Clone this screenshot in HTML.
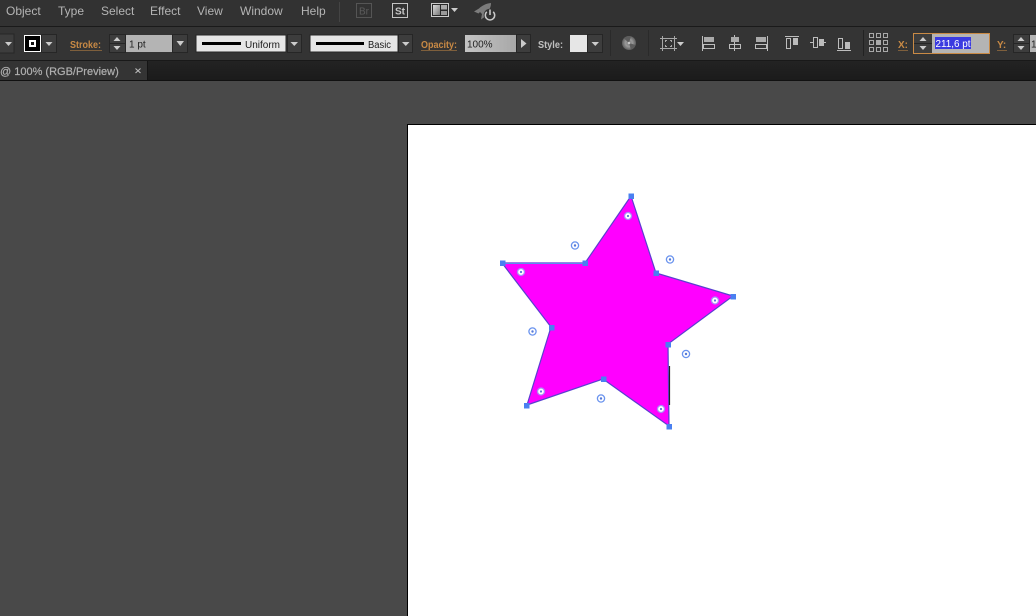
<!DOCTYPE html>
<html><head><meta charset="utf-8"><style>
html,body{margin:0;padding:0;background:#494949}
svg{display:block}
text{font-family:"Liberation Sans",sans-serif}
.m{font-size:12px;fill:#b4b4b4}
.o{font-size:10px;font-weight:bold;fill:#c98a45}
</style></head><body>
<svg width="1036" height="616" viewBox="0 0 1036 616" xmlns="http://www.w3.org/2000/svg">
<defs>
<linearGradient id="tb" x1="0" y1="0" x2="0" y2="1"><stop offset="0" stop-color="#232323"/><stop offset="1" stop-color="#1b1b1b"/></linearGradient>
<linearGradient id="f" x1="0" y1="0" x2="1" y2="0"><stop offset="0" stop-color="#c4c4c4"/><stop offset="1" stop-color="#a8a8a8"/></linearGradient>
<linearGradient id="lg" x1="0" y1="0" x2="1" y2="1"><stop offset="0" stop-color="#ddd"/><stop offset="1" stop-color="#777"/></linearGradient>
<radialGradient id="gl"><stop offset="0" stop-color="#777"/><stop offset=".5" stop-color="#9a9a9a"/><stop offset="1" stop-color="#5e5e5e"/></radialGradient>
</defs>
<rect width="1036" height="616" fill="#494949"/>
<rect width="1036" height="26" fill="#323232"/>
<rect y="26" width="1036" height="1" fill="#1a1a1a"/>
<rect y="27" width="1036" height="33" fill="#343434"/>
<rect y="60" width="1036" height="1" fill="#191919"/>
<rect y="61" width="1036" height="19" fill="url(#tb)"/>
<rect y="80" width="1036" height="1" fill="#111"/>
<rect y="61" width="148" height="19" fill="#343434"/>
<rect x="147" y="61" width="1" height="19" fill="#151515"/>
<text x="0" y="75" fill="#b0b0b0" style="font-size:11px;stroke:#b0b0b0;stroke-width:.2">@ 100% (RGB/Preview)</text>
<path d="M135.500 68.500l5 4.500m0-4.500l-5 4.500" stroke="#bbb" stroke-width="1.100" fill="none"/>

<text class="m" x="6" y="15">Object</text>
<text class="m" x="58" y="15">Type</text>
<text class="m" x="101" y="15">Select</text>
<text class="m" x="150" y="15">Effect</text>
<text class="m" x="197" y="15">View</text>
<text class="m" x="240" y="15">Window</text>
<text class="m" x="301" y="15">Help</text>
<rect x="339" y="2" width="1" height="20" fill="#444"/>

<rect x="356.500" y="3.500" width="15" height="14" fill="none" stroke="#555"/>
<text x="359" y="14.500" fill="#5c5c5c" style="font-size:10px" textLength="10" lengthAdjust="spacing">Br</text>
<rect x="392.500" y="3.500" width="15" height="14" fill="none" stroke="#c4c4c4"/>
<text x="395" y="14.500" style="font-size:10px;font-weight:bold" fill="#c8c8c8" textLength="10" lengthAdjust="spacing">St</text>
<rect x="431.500" y="3.500" width="17" height="13" fill="#2a2a2a" stroke="#ccc"/>
<rect x="433" y="5" width="7" height="10" fill="url(#lg)"/>
<rect x="441" y="5" width="6" height="4.500" fill="#aaa"/>
<rect x="441" y="11" width="6" height="4" fill="#999"/>
<path d="M451 8h7l-3.500 4z" fill="#ccc"/>
<path d="M491 3C486 3.500 482 5.500 479 8.500L474 11.500L478.500 13.500L480 12L482 14L481 19.500L484.500 17C485 14 486 12 488 11C490 9 491 6 491 3Z" fill="#7c7c7c"/>
<circle cx="490" cy="15" r="6.300" fill="#323232"/>
<path d="M486.800 11.800a4.700 4.700 0 1 0 6.400 0" fill="none" stroke="#c8c8c8" stroke-width="1.500"/>
<rect x="489.200" y="9.500" width="1.600" height="5.500" fill="#c8c8c8"/>

<!-- left dropdown -->
<rect x="-1" y="34" width="15" height="19" fill="#3d3d3d" stroke="#262626"/>
<path d="M5 42h7l-3.500 4z" fill="#ccc"/>
<rect x="24.500" y="35.500" width="16" height="16" fill="#000" stroke="#fff"/>
<rect x="29" y="40" width="7" height="7" fill="#fff"/>
<rect x="31" y="42" width="3" height="3" fill="#111"/>
<rect x="41.500" y="34.500" width="15" height="18" fill="#3d3d3d" stroke="#262626"/>
<path d="M45.500 42h7l-3.500 4z" fill="#ccc"/>

<text class="o" x="70" y="48" textLength="31" lengthAdjust="spacingAndGlyphs">Stroke:</text>
<path d="M70.500 50.500h31" stroke="#c98a45" stroke-dasharray="1 1"/>

<rect x="109.500" y="34.500" width="16" height="18" fill="#3d3d3d" stroke="#262626"/>
<rect x="110" y="43" width="15" height="1" fill="#262626"/>
<path d="M113.500 41l3.500-4 3.500 4zM113.500 46h7l-3.500 4z" fill="#ccc"/>
<rect x="126" y="35" width="46" height="17" fill="#b4b4b4"/>
<text x="129" y="47.500" style="font-size:10px" fill="#222">1 pt</text>
<rect x="172.500" y="34.500" width="15" height="18" fill="#3d3d3d" stroke="#262626"/>
<path d="M176.500 41h7.500l-3.700 5z" fill="#ccc"/>

<rect x="196" y="35" width="90" height="17" fill="#e6e6e6" stroke="#262626"/>
<rect x="202" y="42" width="39" height="3" fill="#000"/>
<text x="245" y="48" style="font-size:10px" fill="#1a1a1a">Uniform</text>
<rect x="287.500" y="34.500" width="14" height="18" fill="#3d3d3d" stroke="#262626"/>
<path d="M290.500 42h7.500l-3.700 4z" fill="#ccc"/>

<rect x="310" y="35" width="88" height="17" fill="#e6e6e6" stroke="#262626"/>
<rect x="316" y="42" width="48" height="3" fill="#000"/>
<text x="368" y="48" style="font-size:10px" fill="#1a1a1a" textLength="23" lengthAdjust="spacingAndGlyphs">Basic</text>
<rect x="398.500" y="34.500" width="14" height="18" fill="#3d3d3d" stroke="#262626"/>
<path d="M402 42h7.500l-3.700 4z" fill="#ccc"/>

<text class="o" x="421" y="48" textLength="36" lengthAdjust="spacingAndGlyphs">Opacity:</text>
<path d="M421.500 50.500h36" stroke="#c98a45" stroke-dasharray="1 1"/>
<rect x="465" y="35" width="51" height="17" fill="url(#f)"/>
<text x="467" y="47.500" style="font-size:10px" fill="#222">100%</text>
<rect x="516.500" y="34.500" width="14" height="18" fill="#3d3d3d" stroke="#262626"/>
<path d="M521 39l5.500 4.500-5.500 4.500z" fill="#ccc"/>

<text x="538" y="48" style="font-size:10px;font-weight:bold" fill="#c0c0c0" textLength="25" lengthAdjust="spacingAndGlyphs">Style:</text>
<rect x="570" y="35" width="17" height="17" fill="#e6e6e6"/>
<rect x="587.500" y="34.500" width="15" height="18" fill="#3d3d3d" stroke="#262626"/>
<path d="M591.500 42h7.500l-3.700 4z" fill="#ccc"/>
<rect x="610" y="30" width="1" height="26" fill="#2a2a2a"/>
<circle cx="629" cy="43" r="7" fill="url(#gl)"/>
<path d="M629 43L624 38.500A7 7 0 0 1 631 36.300ZM629 43L635.500 45A7 7 0 0 1 631 49.700Z" fill="#5c5c5c"/>
<circle cx="629" cy="43" r="1.300" fill="#c4c4c4"/>
<rect x="648" y="30" width="1" height="26" fill="#2a2a2a"/>

<!-- transform icon -->
<g fill="none" stroke="#a8a8a8">
<rect x="662.500" y="38.500" width="12" height="10"/>
<path d="M665.500 42v-1.500h1.500M671.500 42v-1.500h-1.500M665.500 45v1.500h1.500M671.500 45v1.500h-1.500M660 38.500h2M660 48.500h2M675 38.500h2M675 48.500h2M662.500 36v2M674.500 36v2M662.500 49v2M674.500 49v2"/>
</g>
<path d="M677 42h7l-3.500 4z" fill="#ccc"/>

<!-- align -->
<g fill="none" stroke="#bdbdbd">
<path d="M702.500 36v15M734.500 35v16M767.500 36v15"/>
<rect x="703.500" y="44.500" width="11" height="4"/>
<rect x="729.500" y="44.500" width="11" height="4"/>
<rect x="755.500" y="44.500" width="11" height="4"/>
<path d="M785 36.500h14M810 42.500h3M824 42.500h2M837 50.500h14"/>
<rect x="786.500" y="38.500" width="4" height="10"/>
<rect x="813.500" y="37.500" width="4" height="10"/>
<rect x="838.500" y="38.500" width="4" height="10"/>
</g>
<rect x="704" y="37" width="10" height="5" fill="#aaa"/>
<rect x="731" y="37" width="8" height="5" fill="#aaa"/>
<rect x="756" y="37" width="10" height="5" fill="#aaa"/>
<rect x="793" y="38" width="5" height="7" fill="#bbb"/>
<rect x="819" y="39" width="5" height="7" fill="#bbb"/>
<rect x="845" y="42" width="5" height="7" fill="#bbb"/>
<rect x="863" y="30" width="1" height="26" fill="#222"/>

<!-- reference point -->
<g fill="none" stroke="#a8a8a8">
<rect x="869.500" y="33.500" width="4" height="4"/><rect x="876.500" y="33.500" width="4" height="4"/><rect x="883.500" y="33.500" width="4" height="4"/>
<rect x="869.500" y="40.500" width="4" height="4"/><rect x="883.500" y="40.500" width="4" height="4"/>
<rect x="869.500" y="47.500" width="4" height="4"/><rect x="876.500" y="47.500" width="4" height="4"/><rect x="883.500" y="47.500" width="4" height="4"/>
</g>
<rect x="876" y="40" width="5" height="5" fill="#aaa"/>

<text class="o" x="898" y="48">X:</text>
<path d="M898.500 50.500h9" stroke="#c98a45" stroke-dasharray="1 1"/>
<rect x="913.500" y="33.500" width="76" height="20" fill="#3d3d3d" stroke="#c98a45"/>
<rect x="914" y="43" width="18" height="1" fill="#262626"/>
<path d="M919.500 41l3.500-4 3.500 4zM919.500 46h7l-3.500 4z" fill="#ccc"/>
<rect x="932" y="34" width="57" height="19" fill="#b4b4b4"/>
<rect x="935" y="37" width="36" height="12" fill="#3b3be0"/>
<text x="935.500" y="47" style="font-size:10.500px" fill="#fff" textLength="35" lengthAdjust="spacingAndGlyphs">211,6 pt</text>

<text class="o" x="997" y="48">Y:</text>
<path d="M997.500 50.500h9" stroke="#c98a45" stroke-dasharray="1 1"/>
<rect x="1013.500" y="34.500" width="16" height="18" fill="#3d3d3d" stroke="#262626"/>
<rect x="1014" y="43" width="15" height="1" fill="#262626"/>
<path d="M1017.500 41l3.500-4 3.500 4zM1017.500 46h7l-3.500 4z" fill="#ccc"/>
<rect x="1030" y="35" width="6" height="17" fill="#b4b4b4"/>
<text x="1031" y="47.500" style="font-size:10px" fill="#222">1</text>

<!-- artboard -->
<rect x="407" y="124" width="629" height="492" fill="#000"/>
<rect x="408" y="125" width="628" height="491" fill="#fff"/>

<!-- star -->
<path d="M631 196L656 273L733 296L668 344L669 426L603 379L527 405L551 327L502 263L585 263Z" fill="#ff00ff" stroke="#5a3fd0" stroke-width="1.200"/>
<path d="M502 263.500H585" stroke="#5b8cf0" stroke-width="1"/>
<path d="M669.500 366V405" stroke="#222" stroke-width="1.200"/>
<g fill="#4a80f0">
<rect x="628.500" y="193.500" width="5.500" height="5.500"/>
<rect x="653.500" y="270.500" width="5.500" height="5.500"/>
<rect x="730.500" y="294" width="5.500" height="5.500"/>
<rect x="665.500" y="342" width="5.500" height="5.500"/>
<rect x="666.500" y="424" width="5.500" height="5.500"/>
<rect x="601" y="376.500" width="5.500" height="5.500"/>
<rect x="524" y="403" width="5.500" height="5.500"/>
<rect x="549" y="325" width="5.500" height="5.500"/>
<rect x="500" y="260.500" width="5.500" height="5.500"/>
<rect x="582.500" y="260.500" width="5.500" height="5.500"/>
</g>
<!-- live corner widgets -->
<g fill="#fff" stroke="#6a93ee" stroke-width="1.300">
<circle cx="575" cy="245.500" r="3.600"/><circle cx="670" cy="259.500" r="3.600"/>
<circle cx="686" cy="354" r="3.600"/><circle cx="601" cy="398.500" r="3.600"/><circle cx="532.500" cy="331.500" r="3.600"/>
</g>
<g fill="#fff" stroke="#a98cf8" stroke-width="1.300">
<circle cx="628" cy="216" r="3.500"/><circle cx="521" cy="272" r="3.500"/><circle cx="715" cy="300.500" r="3.500"/>
<circle cx="661" cy="409" r="3.500"/><circle cx="541" cy="391.500" r="3.500"/>
</g>
<g fill="#5478d8">
<circle cx="575" cy="245.500" r="1.200"/><circle cx="670" cy="259.500" r="1.200"/>
<circle cx="686" cy="354" r="1.200"/><circle cx="601" cy="398.500" r="1.200"/><circle cx="532.500" cy="331.500" r="1.200"/>
<circle cx="628" cy="216" r="1.100"/><circle cx="521" cy="272" r="1.100"/><circle cx="715" cy="300.500" r="1.100"/>
<circle cx="661" cy="409" r="1.100"/><circle cx="541" cy="391.500" r="1.100"/>
</g>
</svg>
</body></html>
